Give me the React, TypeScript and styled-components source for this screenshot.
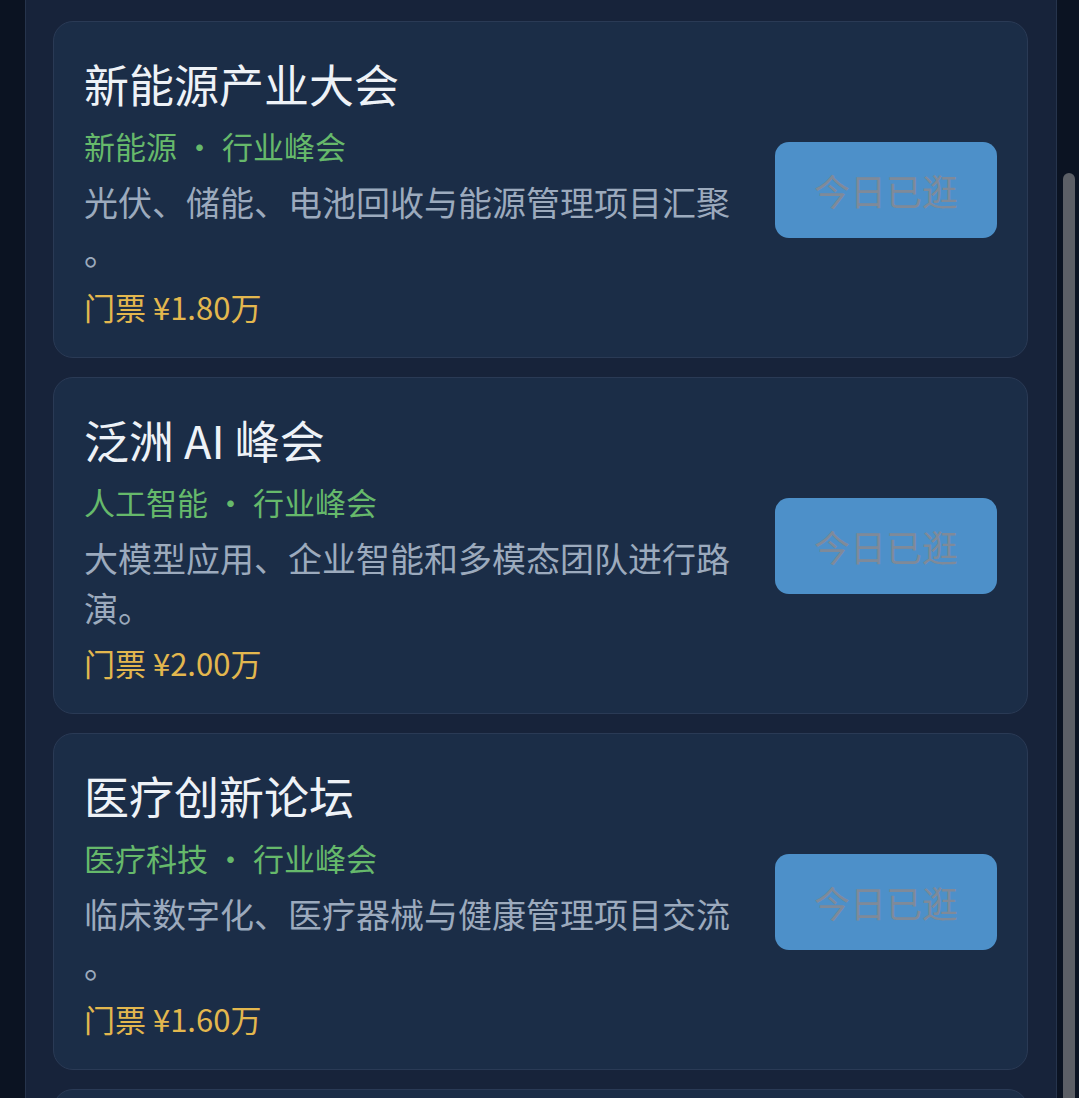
import React from "react";
import styled, { createGlobalStyle } from "styled-components";

const GlobalStyle = createGlobalStyle`
  html, body {
    margin: 0;
    padding: 0;
    height: 100%;
    overflow: hidden;
    background: #0b1322;
  }
  #root { height: 100%; }
  * { box-sizing: border-box; }
`;

const Page = styled.div`
  height: 100vh;
  overflow: hidden;
  background: #0b1322;
  font-family: "Noto Sans CJK SC", "Noto Sans", sans-serif;
`;

const ScrollThumb = styled.div`
  position: fixed;
  top: 173px;
  right: 4px;
  width: 12px;
  height: 960px;
  border-radius: 6px;
  background: #5c5f66;
`;

const Panel = styled.section`
  margin-left: 25px;
  width: 1032px;
  background: #17233a;
  border-left: 1px solid #26344c;
  border-right: 1px solid #26344c;
  padding: 21px 28px 20px 27px;
  display: flex;
  flex-direction: column;
  gap: 19px;
`;

const Card = styled.article`
  display: flex;
  align-items: center;
  gap: 31px;
  background: #1b2d47;
  border: 1px solid #2a3a55;
  border-radius: 20px;
  padding: 28px 30px;
`;

const Info = styled.div`
  flex: 1;
  min-width: 0;
  display: flex;
  flex-direction: column;
  padding: 4px 0 1px;
`;

const Title = styled.h2`
  margin: 0 0 9px;
  font-size: 45px;
  line-height: 1.35;
  font-weight: 400;
  color: #eef2f7;
`;

const Tags = styled.div`
  margin: 0 0 10px;
  font-size: 31px;
  line-height: 1.4;
  color: #66b96b;
`;

const Dot = styled.span`
  display: inline-block;
  width: 45px;
  text-align: center;
`;

const Desc = styled.p`
  margin: 0 0 9px;
  font-size: 34px;
  line-height: 1.45;
  color: #9caabd;
  line-break: anywhere;
`;

const Price = styled.div`
  font-size: 31px;
  line-height: 1.4;
  color: #e3b74e;
`;

const VisitButton = styled.button`
  flex-shrink: 0;
  width: 222px;
  height: 96px;
  border: none;
  border-radius: 14px;
  background: #4d90c9;
  color: #7f8a99;
  font-family: inherit;
  font-size: 36px;
  cursor: default;
`;

type Expo = {
  name: string;
  field: string;
  desc: string;
  price: string;
};

const expos: Expo[] = [
  {
    name: "新能源产业大会",
    field: "新能源",
    desc: "光伏、储能、电池回收与能源管理项目汇聚。",
    price: "门票 ¥1.80万",
  },
  {
    name: "泛洲 AI 峰会",
    field: "人工智能",
    desc: "大模型应用、企业智能和多模态团队进行路演。",
    price: "门票 ¥2.00万",
  },
  {
    name: "医疗创新论坛",
    field: "医疗科技",
    desc: "临床数字化、医疗器械与健康管理项目交流。",
    price: "门票 ¥1.60万",
  },
  {
    name: "智能制造展览会",
    field: "智能制造",
    desc: "工业机器人、数字工厂与自动化解决方案对接。",
    price: "门票 ¥1.50万",
  },
];

export default function App() {
  return (
    <>
      <GlobalStyle />
      <Page>
        <Panel>
          {expos.map((e) => (
            <Card key={e.name}>
              <Info>
                <Title>{e.name}</Title>
                <Tags>
                  {e.field}
                  <Dot>·</Dot>
                  行业峰会
                </Tags>
                <Desc>{e.desc}</Desc>
                <Price>{e.price}</Price>
              </Info>
              <VisitButton disabled>今日已逛</VisitButton>
            </Card>
          ))}
        </Panel>
        <ScrollThumb aria-hidden />
      </Page>
    </>
  );
}
